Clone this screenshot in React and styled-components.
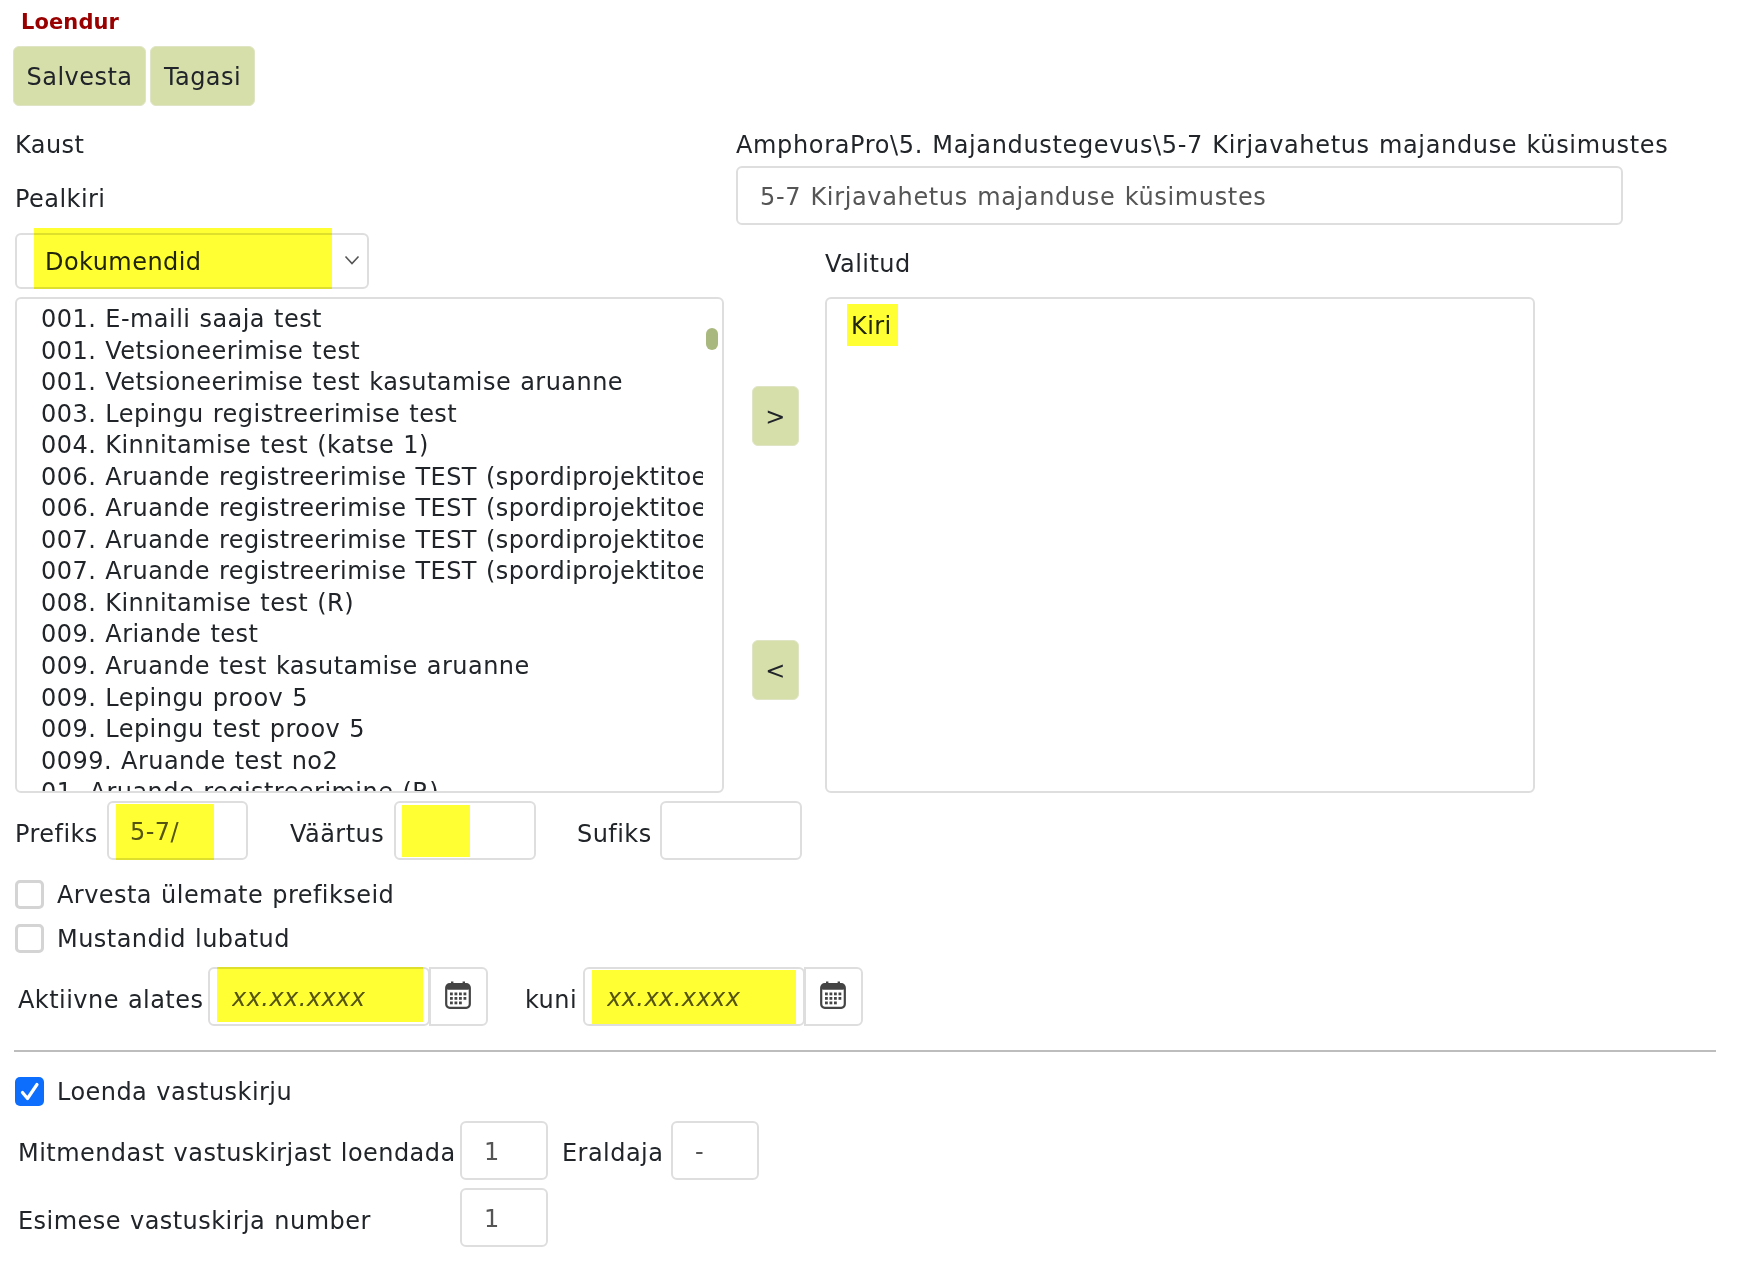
import React from 'react';
import styled, { createGlobalStyle } from 'styled-components';

const GlobalStyle = createGlobalStyle`
  html, body {
    margin: 0;
    background: #fff;
  }
  body {
    font-family: "DejaVu Sans", Verdana, sans-serif;
    font-size: 24px;
    letter-spacing: 0.45px;
    word-spacing: 1px;
    color: #212529;
  }
  * { box-sizing: border-box; }
`;

const Page = styled.div`
  width: 1751px;
  height: 1281px;
  padding: 0 15px;
  overflow: hidden;
`;

const Title = styled.h1`
  margin: 0 0 4px 6px;
  height: 42px;
  padding-top: 1px;
  line-height: 42px;
  font-size: 21px;
  font-weight: 700;
  letter-spacing: 0.1px;
  color: #990000;
`;

const Toolbar = styled.div`
  display: flex;
  gap: 4px;
  margin-left: -2px;
`;

const Button = styled.button`
  height: ${p => p.$h || 60}px;
  width: ${p => p.$w}px;
  padding: 2px 0 0;
  border: 1px solid #dfe5c4;
  border-radius: 6px;
  background: #d6dfaa;
  color: #212529;
  font: inherit;
  letter-spacing: inherit;
  word-spacing: inherit;
`;

const HeaderGrid = styled.div`
  display: grid;
  grid-template-columns: 721px 1fr;
  grid-template-rows: 40px 59px;
  row-gap: 2px;
  margin-top: 18px;
`;

const Label = styled.div`
  flex: none;
  width: ${p => (p.$w ? `${p.$w}px` : 'auto')};
  white-space: nowrap;
  line-height: ${p => p.$lh || 40}px;
  padding-top: ${p => p.$pt ?? 1}px;
  letter-spacing: ${p => p.$ls || 'inherit'};
`;

const TextField = styled.input`
  display: block;
  flex: none;
  width: ${p => p.$w}px;
  height: ${p => p.$h || 59}px;
  padding: 2px ${p => p.$pad || 22}px 0;
  border: 2px solid #dedede;
  border-radius: 6px;
  background: #fff;
  color: #555;
  font: inherit;
  font-style: ${p => (p.$italic ? 'italic' : 'normal')};
  letter-spacing: ${p => p.$ls || 'inherit'};
  word-spacing: inherit;
  outline: none;
`;

const PickerGrid = styled.div`
  display: grid;
  grid-template-columns: 709px 101px 710px;
  grid-template-rows: 56px 496px;
  row-gap: 8px;
  margin-top: 8px;
`;

const SelectWrap = styled.div`
  position: relative;
  width: 354px;
  height: 56px;
`;

const Select = styled.select`
  appearance: none;
  display: block;
  width: 100%;
  height: 100%;
  padding: 2px 0 0 28px;
  border: 2px solid #dedede;
  border-radius: 6px;
  background: #fff;
  color: #212529;
  font: inherit;
  letter-spacing: inherit;
`;

const Chevron = styled.svg`
  position: absolute;
  right: 9px;
  top: 21px;
`;

const ValitudCell = styled.div`
  display: flex;
  align-items: flex-end;
  height: 51px;
`;

const ListBox = styled.div`
  position: relative;
  height: 496px;
  padding: ${p => (p.$right ? 13 : 5)}px 0 0 24px;
  border: 2px solid #dedede;
  border-radius: 6px;
  overflow: hidden;
`;

const ListClip = styled.div`
  width: 662px;
  overflow: hidden;
`;

const ListItem = styled.div`
  height: 31.55px;
  line-height: 31.55px;
  white-space: nowrap;
`;

const ScrollThumb = styled.div`
  position: absolute;
  top: 29px;
  right: 4px;
  width: 12px;
  height: 22px;
  border-radius: 6px;
  background: #a9b87f;
`;

const MoveColumn = styled.div`
  display: flex;
  flex-direction: column;
  gap: 194px;
  padding: 89px 0 0 28px;
`;

const Highlight = styled.span`
  position: absolute;
  left: ${p => p.$x}px;
  top: ${p => p.$y}px;
  width: ${p => p.$w}px;
  height: ${p => p.$h}px;
  background: #ffff33;
  mix-blend-mode: multiply;
  pointer-events: none;
`;

const Row = styled.div`
  display: flex;
  align-items: center;
  margin-top: ${p => p.$mt || 0}px;
  margin-left: ${p => p.$ml || 0}px;
`;

const FieldWrap = styled.div`
  position: relative;
  flex: none;
  margin-right: ${p => p.$mr || 0}px;
`;

const CheckRow = styled.label`
  display: flex;
  align-items: center;
  gap: 13px;
  height: 29px;
  margin-top: ${p => p.$mt}px;
`;

const CheckBox = styled.span`
  display: flex;
  align-items: center;
  justify-content: center;
  width: 29px;
  height: 29px;
  border: ${p => (p.$checked ? 'none' : '3px solid #d4d4d4')};
  border-radius: 5px;
  background: ${p => (p.$checked ? '#0d6efd' : '#fff')};
`;

const IconAddon = styled.div`
  display: flex;
  flex: none;
  align-items: center;
  justify-content: center;
  width: 59px;
  height: 59px;
  margin-left: -1px;
  margin-right: ${p => p.$mr || 0}px;
  padding: 0 2px 3px 0;
  border: 2px solid #dedede;
  border-radius: 0 6px 6px 0;
`;

const Divider = styled.hr`
  margin: 24px 0 0 -1px;
  width: 1702px;
  height: 2px;
  border: 0;
  background: #bdbdbd;
`;

const items = [
  '001. E-maili saaja test',
  '001. Vetsioneerimise test',
  '001. Vetsioneerimise test kasutamise aruanne',
  '003. Lepingu registreerimise test',
  '004. Kinnitamise test (katse 1)',
  '006. Aruande registreerimise TEST (spordiprojektitoetus)',
  '006. Aruande registreerimise TEST (spordiprojektitoetus)',
  '007. Aruande registreerimise TEST (spordiprojektitoetus)',
  '007. Aruande registreerimise TEST (spordiprojektitoetus)',
  '008. Kinnitamise test (R)',
  '009. Ariande test',
  '009. Aruande test kasutamise aruanne',
  '009. Lepingu proov 5',
  '009. Lepingu test proov 5',
  '0099. Aruande test no2',
  '01. Aruande registreerimine (R)',
];

function CalendarIcon() {
  return (
    <svg width="26" height="28" viewBox="0 0 26 28">
      <rect x="1.2" y="3.2" width="23.6" height="23.6" rx="3.5" fill="#fff" stroke="#444" strokeWidth="2.2" />
      <rect x="1.2" y="3.2" width="23.6" height="5.5" rx="2" fill="#444" />
      <rect x="6" y="0.5" width="2.4" height="4" fill="#444" />
      <rect x="17.6" y="0.5" width="2.4" height="4" fill="#444" />
      {[11.5, 16, 20.5].map(y =>
        [5, 9.5, 14, 18.5].map(x =>
          (y === 20.5 && x === 18.5) ? null : <rect key={`${x}-${y}`} x={x} y={y} width="2.8" height="2.8" fill="#444" />
        )
      )}
    </svg>
  );
}

function DateField({ value, highlight, mr }) {
  return (
    <>
      <FieldWrap>
        <TextField $w={222} $pad={22} $italic readOnly value={value} />
        <Highlight {...highlight} />
      </FieldWrap>
      <IconAddon $mr={mr}>
        <CalendarIcon />
      </IconAddon>
    </>
  );
}

function App() {
  return (
    <Page>
      <GlobalStyle />
      <Title>Loendur</Title>
      <Toolbar>
        <Button $w={133}>Salvesta</Button>
        <Button $w={105}>Tagasi</Button>
      </Toolbar>

      <HeaderGrid>
        <Label>Kaust</Label>
        <Label $ls="0.65px">AmphoraPro\5. Majandustegevus\5-7 Kirjavahetus majanduse küsimustes</Label>
        <Label $lh={64}>Pealkiri</Label>
        <TextField $w={887} $ls="0.65px" readOnly value="5-7 Kirjavahetus majanduse küsimustes" />
      </HeaderGrid>

      <PickerGrid>
        <SelectWrap>
          <Select defaultValue="Dokumendid">
            <option>Dokumendid</option>
          </Select>
          <Chevron width="16" height="12" viewBox="0 0 16 12" fill="none" stroke="#555" strokeWidth="1.6">
            <path d="M1.5 2.5 L8 9.5 L14.5 2.5" />
          </Chevron>
          <Highlight $x={19} $y={-5} $w={298} $h={61} />
        </SelectWrap>
        <div />
        <ValitudCell>
          <Label>Valitud</Label>
        </ValitudCell>

        <ListBox>
          <ListClip>
            {items.map((item, i) => (
              <ListItem key={i}>{item}</ListItem>
            ))}
          </ListClip>
          <ScrollThumb />
        </ListBox>
        <MoveColumn>
          <Button $w={47} $h={60}>&gt;</Button>
          <Button $w={47} $h={60}>&lt;</Button>
        </MoveColumn>
        <ListBox $right>
          Kiri
          <Highlight $x={20} $y={5} $w={51} $h={42} />
        </ListBox>
      </PickerGrid>

      <Row $mt={8}>
        <Label $w={92} $pt={6}>Prefiks</Label>
        <FieldWrap $mr={42}>
          <TextField $w={141} $pad={21} readOnly value="5-7/" />
          <Highlight $x={9} $y={3} $w={98} $h={56} />
        </FieldWrap>
        <Label $w={104} $pt={6}>Väärtus</Label>
        <FieldWrap $mr={41}>
          <TextField $w={142} $pad={20} readOnly value="" />
          <Highlight $x={8} $y={4} $w={68} $h={52} />
        </FieldWrap>
        <Label $w={83} $pt={6}>Sufiks</Label>
        <FieldWrap>
          <TextField $w={142} $pad={20} readOnly value="" />
        </FieldWrap>
      </Row>

      <CheckRow $mt={20}>
        <CheckBox />
        Arvesta ülemate prefikseid
      </CheckRow>
      <CheckRow $mt={15}>
        <CheckBox />
        Mustandid lubatud
      </CheckRow>

      <Row $mt={14} $ml={3}>
        <Label $w={190} $pt={6}>Aktiivne alates</Label>
        <DateField value="xx.xx.xxxx" highlight={{ $x: 9, $y: 0, $w: 206, $h: 55 }} mr={37} />
        <Label $w={58} $pt={6}>kuni</Label>
        <DateField value="xx.xx.xxxx" highlight={{ $x: 9, $y: 3, $w: 204, $h: 54 }} />
      </Row>

      <Divider />

      <CheckRow $mt={25}>
        <CheckBox $checked>
          <svg width="22" height="24" viewBox="0 0 22 24" fill="none" stroke="#fff" strokeWidth="3.2" strokeLinecap="round" strokeLinejoin="round">
            <path d="M3.5 12.5 L8.5 18.5 L18 4.5" />
          </svg>
        </CheckBox>
        Loenda vastuskirju
      </CheckRow>

      <Row $mt={15} $ml={3}>
        <Label $w={442} $pt={5}>Mitmendast vastuskirjast loendada</Label>
        <FieldWrap $mr={14}>
          <TextField $w={88} $pad={22} readOnly value="1" />
        </FieldWrap>
        <Label $w={109} $pt={5}>Eraldaja</Label>
        <TextField $w={88} $pad={22} readOnly value="-" />
      </Row>
      <Row $mt={8} $ml={3}>
        <Label $w={442} $pt={6}>Esimese vastuskirja number</Label>
        <TextField $w={88} $pad={22} readOnly value="1" />
      </Row>
    </Page>
  );
}

export default App;
